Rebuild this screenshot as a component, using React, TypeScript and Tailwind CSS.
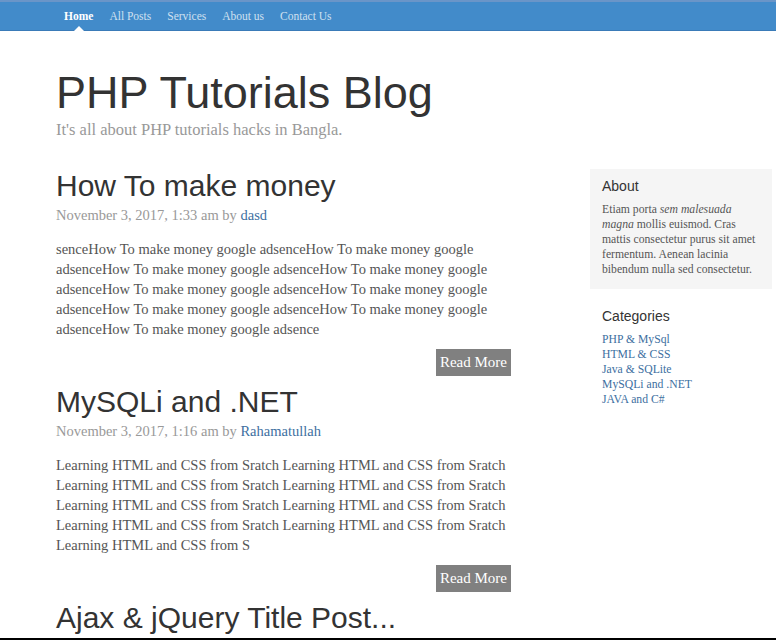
import React from "react";

const serif = "font-['Liberation_Serif',Georgia,serif]";
const sans = "font-['Liberation_Sans',Arial,sans-serif]";

function Post({ title, date, author, body }: { title: string; date: string; author: string; body: string }) {
  return (
    <div className="mb-[9px]">
      <h2 className={`${sans} text-[30px] leading-[34px] text-[#333]`}>{title}</h2>
      <p className={`${serif} text-[14.5px] leading-[20px] text-[#999] mt-[2px]`}>
        {date} by <a className="text-[#3d6f9f]">{author}</a>
      </p>
      <p className={`${serif} text-[14.5px] leading-[20px] text-[#555] mt-[14px]`}>{body}</p>
      <div className="flex justify-end mt-[10px]">
        <button className={`${serif} bg-[#808080] text-white text-[15px] h-[27px] px-[4px] leading-[27px]`}>Read More</button>
      </div>
    </div>
  );
}

export default function App() {
  const nav = ["Home", "All Posts", "Services", "About us", "Contact Us"];
  const b1 =
    "senceHow To make money google adsenceHow To make money google adsenceHow To make money google adsenceHow To make money google adsenceHow To make money google adsenceHow To make money google adsenceHow To make money google adsenceHow To make money google adsenceHow To make money google adsence";
  const b2 =
    "Learning HTML and CSS from Sratch Learning HTML and CSS from Sratch Learning HTML and CSS from Sratch Learning HTML and CSS from Sratch Learning HTML and CSS from Sratch Learning HTML and CSS from Sratch Learning HTML and CSS from Sratch Learning HTML and CSS from Sratch Learning HTML and CSS from S";
  const cats = ["PHP & MySql", "HTML & CSS", "Java & SQLite", "MySQLi and .NET", "JAVA and C#"];
  return (
    <div className="w-[776px] h-[640px] overflow-hidden flex flex-col bg-white">
      <nav className="h-[31px] shrink-0 bg-[#428bca] border-t-[2px] border-t-[#6a95c8] border-b border-b-[#3a7bb8] flex items-center pl-[64px] gap-[16px]">
        {nav.map((n, i) => (
          <div key={n} className="relative h-full flex items-center pt-[2px]">
            <span className={`${serif} text-[11.5px] ${i === 0 ? "text-white font-semibold" : "text-[#cfe0f0]"}`}>{n}</span>
            {i === 0 && (
              <span className="absolute bottom-[-1px] left-1/2 -translate-x-1/2 w-0 h-0 border-l-[5px] border-r-[5px] border-b-[5px] border-l-transparent border-r-transparent border-b-white" />
            )}
          </div>
        ))}
      </nav>
      <div className="flex-1 overflow-hidden pl-[56px]">
        <div className="pt-[36px]">
          <h1 className={`${sans} text-[45px] leading-[52px] text-[#333]`}>PHP Tutorials Blog</h1>
          <p className={`${serif} text-[16.5px] leading-[22px] text-[#999]`}>It's all about PHP tutorials hacks in Bangla.</p>
        </div>
        <div className="flex mt-[28px]">
          <div className="w-[455px] shrink-0">
            <Post title="How To make money" date="November 3, 2017, 1:33 am" author="dasd" body={b1} />
            <Post title="MySQLi and .NET" date="November 3, 2017, 1:16 am" author="Rahamatullah" body={b2} />
            <h2 className={`${sans} text-[30px] leading-[34px] text-[#333]`}>Ajax &amp; jQuery Title Post...</h2>
          </div>
          <div className="ml-[79px] w-[182px] shrink-0">
            <div className="bg-[#f5f5f5] px-[12px] pt-[8px] pb-[12px]">
              <h4 className={`${sans} text-[14px] leading-[18px] text-[#333]`}>About</h4>
              <p className={`${serif} text-[11.7px] leading-[15px] text-[#555] mt-[7px]`}>
                Etiam porta <em>sem malesuada magna</em> mollis euismod. Cras mattis consectetur purus sit amet fermentum. Aenean lacinia bibendum nulla sed consectetur.
              </p>
            </div>
            <div className="px-[12px] mt-[18px]">
              <h4 className={`${sans} text-[14px] leading-[18px] text-[#333]`}>Categories</h4>
              <ul className="mt-[7px]">
                {cats.map((c) => (
                  <li key={c} className={`${serif} text-[11.7px] leading-[15px] text-[#3d6f9f]`}>{c}</li>
                ))}
              </ul>
            </div>
          </div>
        </div>
      </div>
      <div className="h-[2px] shrink-0 bg-black" />
    </div>
  );
}
